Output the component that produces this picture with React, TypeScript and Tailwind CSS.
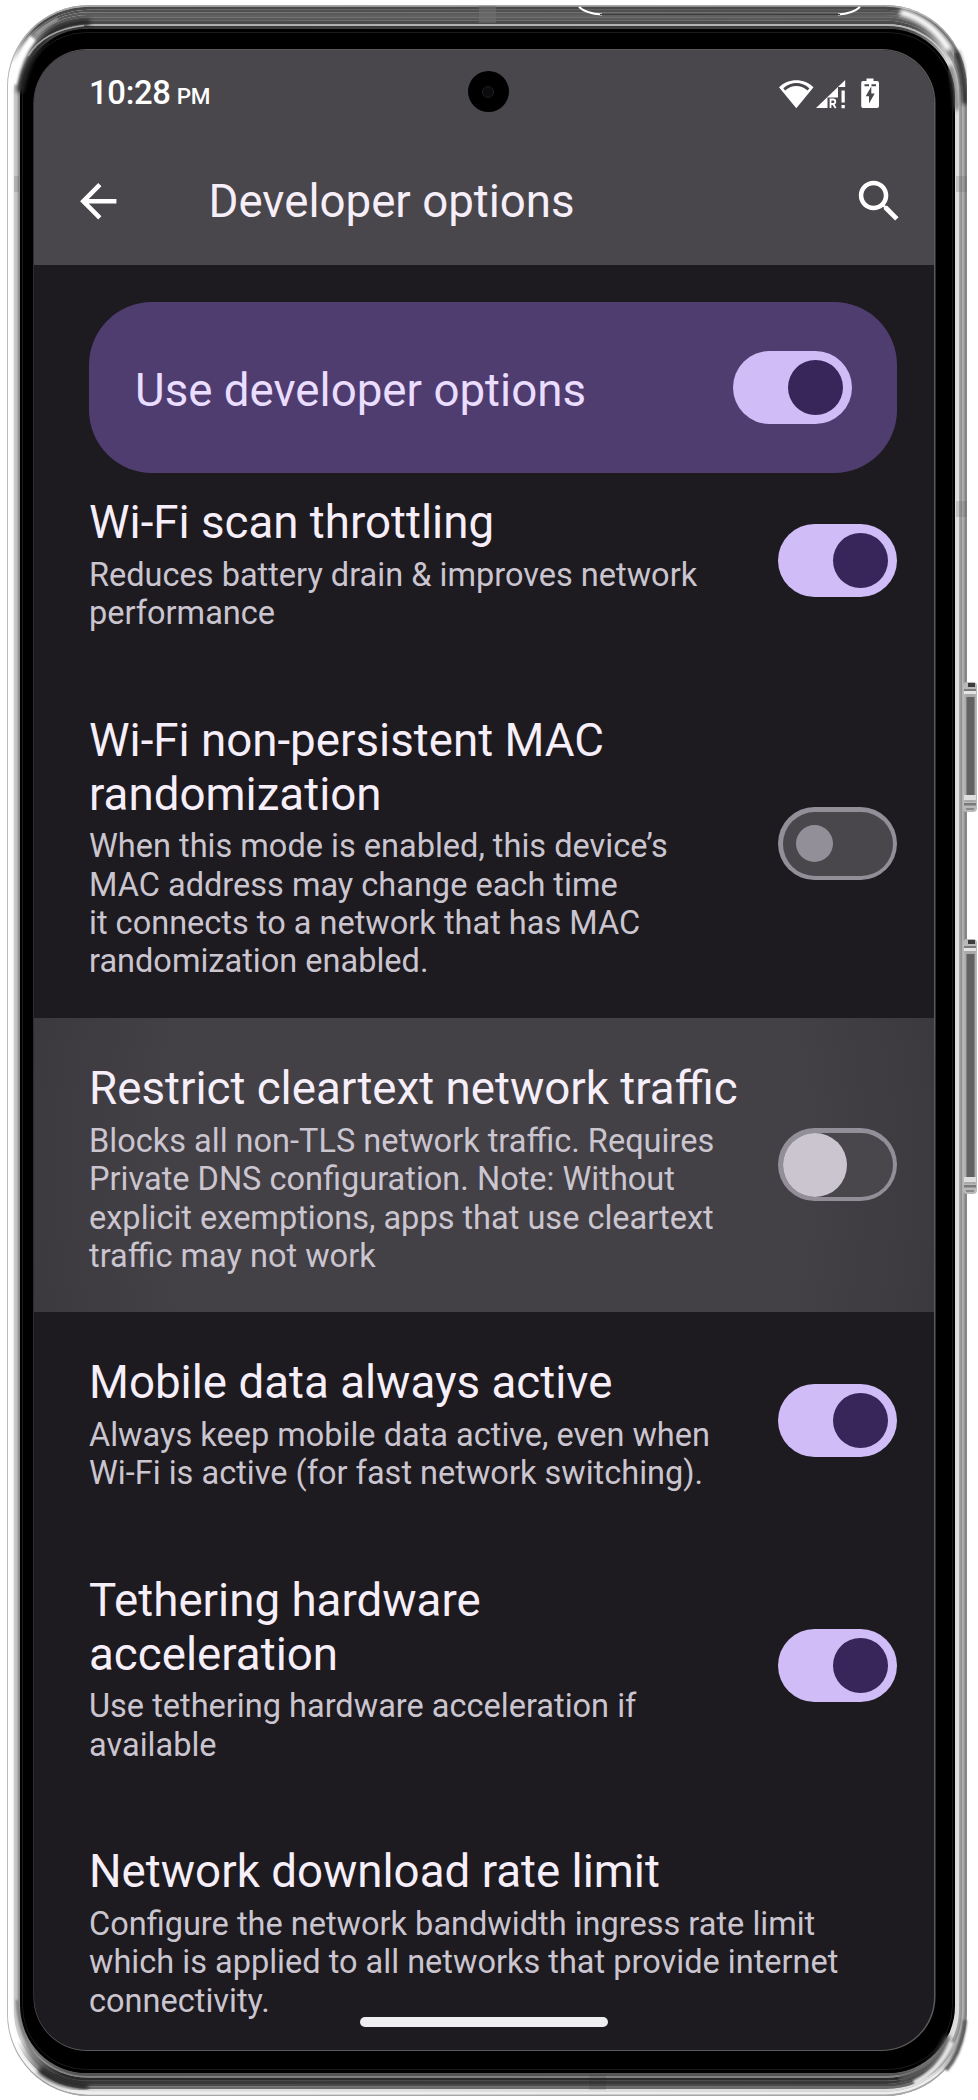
import React from "react";

type Layer = { t: number; left: string; right: string; top: string; bottom: string };

const layers: Layer[] = [
  { t: 0, left: "#b4b4b4", right: "#8a8a8a", top: "#a8a8a8", bottom: "#a6a6a6" },
  { t: 0.07, left: "#ffffff", right: "#848484", top: "#484848", bottom: "#eeeeee" },
  { t: 0.2, left: "#ffffff", right: "#a2a2a2", top: "#505050", bottom: "#dcdcdc" },
  { t: 0.3, left: "#fdfdfd", right: "#b2b2b2", top: "#5a5a5a", bottom: "#6a6a6a" },
  { t: 0.42, left: "#fafafa", right: "#8e8e8e", top: "#606060", bottom: "#4a4a4a" },
  { t: 0.52, left: "#cacaca", right: "#a0a0a0", top: "#585858", bottom: "#383838" },
  { t: 0.66, left: "#c2c2c2", right: "#e0e0e0", top: "#4c4c4c", bottom: "#2c2c2c" },
  { t: 0.8, left: "#a8a8a8", right: "#dedede", top: "#b4b4b4", bottom: "#828282" },
  { t: 0.87, left: "#8c8c8c", right: "#dcdcdc", top: "#343434", bottom: "#545454" },
  { t: 1, left: "#000000", right: "#000000", top: "#000000", bottom: "#000000" },
];

function SideKey({ y, h }: { y: number; h: number }) {
  return (
    <g>
      <rect x="963" y={y} width="14" height={h} rx="4" fill="#b9b9b9" />
      <rect x="964.500" y={y + 10} width="11" height={h - 20} fill="#a9a9a9" />
      <rect x="966.500" y={y + 15} width="8" height={h - 32} fill="#626262" />
      <rect x="968" y={y + 1} width="7" height="4" fill="#3c3c3c" />
      <rect x="964" y={y + 7} width="12" height="2" fill="#7c7c7c" />
      <rect x="964" y={y + 9} width="12" height="3" fill="#e4e4e4" />
      <rect x="964" y={y + h - 17} width="12" height="5" fill="#dedede" />
      <rect x="964" y={y + h - 9} width="12" height="2.500" fill="#7a7a7a" />
      <rect x="966" y={y + h - 4} width="8" height="2" fill="#8a8a8a" />
    </g>
  );
}

function DeviceFrame() {
  return (
    <svg className="absolute inset-0" width="978" height="2100" viewBox="0 0 978 2100" aria-hidden="true">
      <defs>
        {layers.map((l, i) => (
          <React.Fragment key={i}>
            <linearGradient id={"side" + i} gradientUnits="userSpaceOnUse" x1="0" x2="978" y1="0" y2="0">
              <stop offset="0.05" stopColor={l.left} />
              <stop offset="0.95" stopColor={l.right} />
            </linearGradient>
            <linearGradient id={"cap" + i} gradientUnits="userSpaceOnUse" x1="0" x2="0" y1="0" y2="2100">
              <stop offset="0.012" stopColor={l.top} />
              <stop offset="0.03" stopColor={l.top} stopOpacity="0" />
              <stop offset="0.972" stopColor={l.bottom} stopOpacity="0" />
              <stop offset="0.988" stopColor={l.bottom} />
            </linearGradient>
          </React.Fragment>
        ))}
        <filter id="soft" x="-20%" y="-20%" width="140%" height="140%">
          <feGaussianBlur stdDeviation="2" />
        </filter>
        <filter id="fine" x="-20%" y="-20%" width="140%" height="140%">
          <feGaussianBlur stdDeviation="1" />
        </filter>
      </defs>
      {layers.map((l, i) => {
        const box = {
          x: 7 + 13 * l.t,
          y: 5 + 24 * l.t,
          width: 960 - 25 * l.t,
          height: 2091 - 47 * l.t,
          rx: 82 - 15 * l.t,
        };
        return (
          <g key={i}>
            <rect {...box} fill={`url(#side${i})`} />
            <rect {...box} fill={`url(#cap${i})`} />
          </g>
        );
      })}
      <SideKey y={682} h={130} />
      <SideKey y={939} h={255} />
      <path d="M20 92 Q26 54 52 32 Q66 23 90 22" fill="none" stroke="#2c2c2c" strokeWidth="7" filter="url(#soft)" />
      <path d="M13 84 Q17 58 33 38" fill="none" stroke="#fff" strokeWidth="7" filter="url(#fine)" />
      <path d="M36 34 Q44 26 58 19" fill="none" stroke="#a0a0a0" strokeWidth="3" filter="url(#fine)" />
      <path d="M28 56 Q44 30 84 25.500" fill="none" stroke="#a8a8a8" strokeWidth="1.500" />
      <path d="M900 12 Q932 20 949 50" fill="none" stroke="#fff" strokeWidth="7" filter="url(#soft)" />
      <path d="M956 52 Q964 74 965 104" fill="none" stroke="#1c1c1c" strokeWidth="5" filter="url(#soft)" />
      <path d="M950 66 Q955 80 957 110" fill="none" stroke="#6a6a6a" strokeWidth="4" filter="url(#soft)" />
      <path d="M40 2069 Q54 2083 88 2086" fill="none" stroke="#2c2c2c" strokeWidth="8" filter="url(#soft)" />
      <path d="M17 2000 Q19 2034 36 2058" fill="none" stroke="#7a7a7a" strokeWidth="2.500" filter="url(#fine)" />
      <path d="M900 2079 Q936 2070 948 2036" fill="none" stroke="#5a5a5a" strokeWidth="6" filter="url(#soft)" />
      <path d="M914 2083 Q940 2070 952 2042" fill="none" stroke="#e4e4e4" strokeWidth="5" filter="url(#fine)" />
      <path d="M946 2070 Q962 2052 965 2020" fill="none" stroke="#5c5c5c" strokeWidth="4" filter="url(#fine)" />
      <rect x="479" y="6" width="17" height="17" fill="#707070" opacity="0.6" />
      <rect x="956" y="176" width="11" height="16" fill="#555" opacity="0.200" />
      <rect x="956" y="501" width="11" height="16" fill="#555" opacity="0.200" />
      <rect x="14" y="176" width="5" height="16" fill="#555" opacity="0.200" />
      <rect x="589" y="2075" width="17" height="15" fill="#222" opacity="0.120" />
      <path d="M579 7 Q586 13.500 602 14.500 M860 7 Q853 13.500 838 14.500" fill="none" stroke="#fff" strokeWidth="2" />
      <path d="M600 14.500 H840" stroke="#3c3c3c" strokeWidth="1" />
      <rect x="22.500" y="32.500" width="930" height="2037" rx="64" fill="none" stroke="#1b1b1b" />
      <rect x="33.500" y="49" width="902" height="2002" rx="54" fill="#5a5a5a" />
    </svg>
  );
}

type SwitchKind = "on" | "off" | "pressed";

function Switch({ kind }: { kind: SwitchKind }) {
  if (kind === "on") {
    return (
      <span className="flex h-[73px] w-[119px] shrink-0 items-center justify-end rounded-full bg-[#d0bcf6] pr-[9px]">
        <span className="size-[55px] rounded-full bg-[#38265a]" />
      </span>
    );
  }
  if (kind === "off") {
    return (
      <span className="flex h-[73px] w-[119px] shrink-0 items-center rounded-full bg-[#938f99] p-[4.500px]">
        <span className="flex h-full w-full items-center rounded-full bg-[#49464c] pl-[13.500px]">
          <span className="size-[37px] rounded-full bg-[#938f99]" />
        </span>
      </span>
    );
  }
  return (
    <span className="flex h-[73px] w-[119px] shrink-0 items-center rounded-full bg-[#938f99] p-[4.500px]">
      <span className="flex h-full w-full items-center rounded-full bg-[#49464c]">
        <span className="size-[64px] rounded-full bg-[#cac5cf]" />
      </span>
    </span>
  );
}

type Item = { title: string[]; lines: string[]; kind?: SwitchKind; height: string; row?: string };

const items: Item[] = [
  {
    title: ["Wi-Fi scan throttling"],
    lines: ["Reduces battery drain & improves network", "performance"],
    kind: "on",
    height: "h-[218px]",
  },
  {
    title: ["Wi-Fi non-persistent MAC", "randomization"],
    lines: [
      "When this mode is enabled, this device’s",
      "MAC address may change each time",
      "it connects to a network that has MAC",
      "randomization enabled.",
    ],
    kind: "off",
    height: "h-[348px]",
  },
  {
    title: ["Restrict cleartext network traffic"],
    lines: [
      "Blocks all non-TLS network traffic. Requires",
      "Private DNS configuration. Note: Without",
      "explicit exemptions, apps that use cleartext",
      "traffic may not work",
    ],
    kind: "pressed",
    height: "h-[294px]",
    row: "bg-[radial-gradient(ellipse_60%_220%_at_50%_50%,#434046_60%,#3a373d_90%,#3a373d_100%)]",
  },
  {
    title: ["Mobile data always active"],
    lines: ["Always keep mobile data active, even when", "Wi-Fi is active (for fast network switching)."],
    kind: "on",
    height: "h-[218px]",
  },
  {
    title: ["Tethering hardware", "acceleration"],
    lines: ["Use tethering hardware acceleration if", "available"],
    kind: "on",
    height: "h-[271px]",
  },
  {
    title: ["Network download rate limit"],
    lines: [
      "Configure the network bandwidth ingress rate limit",
      "which is applied to all networks that provide internet",
      "connectivity.",
    ],
    height: "h-[249px]",
  },
];

function Row({ item }: { item: Item }) {
  return (
    <li className={`flex shrink-0 items-center justify-between pr-[37px] pl-[55px] ${item.height} ${item.row ?? ""}`}>
      <div className="self-start pt-[44.800px] whitespace-nowrap">
        <h2 className="text-[45.700px] leading-[53.300px] text-[#f6eef8]">
          {item.title.map((t) => (
            <span key={t} className="block">{t}</span>
          ))}
        </h2>
        <p className="mt-[6.300px] text-[32.530px] leading-[38.400px] text-[#cac5cf]">
          {item.lines.map((t) => (
            <span key={t} className="block">{t}</span>
          ))}
        </p>
      </div>
      {item.kind && <Switch kind={item.kind} />}
    </li>
  );
}

function StatusBar() {
  return (
    <div className="flex h-[88px] items-start justify-between pt-[23.500px] pr-[55px] pl-[55px] text-white">
      <div className="flex items-baseline gap-[6px] font-medium">
        <span className="text-[32.800px] leading-[40px] tracking-[-0.300px]">10:28</span>
        <span className="text-[22.500px] leading-[40px] tracking-[-0.300px]">PM</span>
      </div>
      <svg className="mt-[2.500px]" width="102" height="34" viewBox="777 75 102 34" aria-label="Wi-Fi, signal and battery">
        <path fill="#fff" d="M779 86.300C788 76.800 804.500 76.800 813.500 86.300L796.300 107.300Z" />
        <path fill="none" stroke="#49464c" strokeWidth="2.800" d="M784.200 88.300Q796.300 78.800 808.500 88.300" />
        <path fill="#fff" d="M845.200 79V86H838V96.500H827.500V107H816Z" />
        <path fill="none" stroke="#fff" strokeWidth="1.800" d="M830.500 107V98.500H833Q835.300 98.500 835.300 100.700T833 103H830.500M833 103L835.700 107" />
        <path fill="#fff" d="M841.500 89.500H844.800V101.500H841.500ZM841.500 104H844.800V107.200H841.500Z" />
        <path fill="#fff" d="M866.500 77.500H873.500V80H877Q879 80 879 82V105Q879 107 877 107H863Q861.200 107 861.200 105V82Q861.200 80 863 80H866.500Z" />
        <path fill="#49464c" d="M864.500 83.300H869V85.300H864.500ZM871.500 83.300H876V85.300H871.500ZM871.300 85.500L865.700 95.300H869V102.500L874.700 92.500H871.300Z" />
      </svg>
    </div>
  );
}

export default function App() {
  return (
    <div className="relative flex h-[2100px] w-[978px] bg-white font-[Roboto,sans-serif]">
      <DeviceFrame />
      <main className="relative mt-[49.500px] ml-[34px] flex h-[2000.500px] w-[900px] flex-col overflow-hidden rounded-[53px] bg-[#1d1a20]">
        <div className="h-[215.500px] shrink-0 bg-[#49464c]">
          <StatusBar />
          <header className="flex h-[127px] items-start pt-[36px] pr-[28px] pl-[37px] text-white">
            <svg width="54.500" height="54.500" viewBox="0 0 24 24" fill="currentColor" aria-label="Back">
              <path d="M20 11H7.830l5.590-5.590L12 4l-8 8 8 8 1.410-1.410L7.830 13H20v-2z" />
            </svg>
            <h1 className="mt-[1px] ml-[83px] text-[45.650px] leading-[54px] whitespace-nowrap text-[#f6eef8]">Developer options</h1>
            <svg className="ml-auto" width="54.500" height="54.500" viewBox="0 0 24 24" fill="currentColor" aria-label="Search">
              <path d="M15.500 14h-.790l-.280-.270C15.410 12.590 16 11.110 16 9.500 16 5.910 13.090 3 9.500 3S3 5.910 3 9.500 5.910 16 9.500 16c1.610 0 3.090-.590 4.230-1.570l.270.280v.790l5 4.990L20.490 19l-4.990-5zm-6 0C7.010 14 5 11.990 5 9.500S7.010 5 9.500 5 14 7.010 14 9.500 11.990 14 9.500 14z" />
            </svg>
          </header>
        </div>
        <section className="mt-[37px] mr-[37px] ml-[55px] flex h-[171px] shrink-0 items-center justify-between rounded-[63px] bg-[#503d70] pr-[45.500px] pl-[46px]">
          <span className="pt-[7px] text-[45.700px] leading-[54px] text-[#eaddff]">Use developer options</span>
          <Switch kind="on" />
        </section>
        <ul className="-mt-[21.500px] flex flex-col">
          {items.map((item) => (
            <Row key={item.title[0]} item={item} />
          ))}
        </ul>
        <div className="absolute top-[1967.500px] left-[326px] h-[10px] w-[247.500px] rounded-full bg-[#eeedef]" />
        <div className="absolute top-[21.500px] left-[433.500px] flex size-[41px] items-center justify-center rounded-full bg-black">
          <div className="size-[12px] rounded-full border border-[#211d20] bg-[#0b0a0d]" />
        </div>
      </main>
    </div>
  );
}
